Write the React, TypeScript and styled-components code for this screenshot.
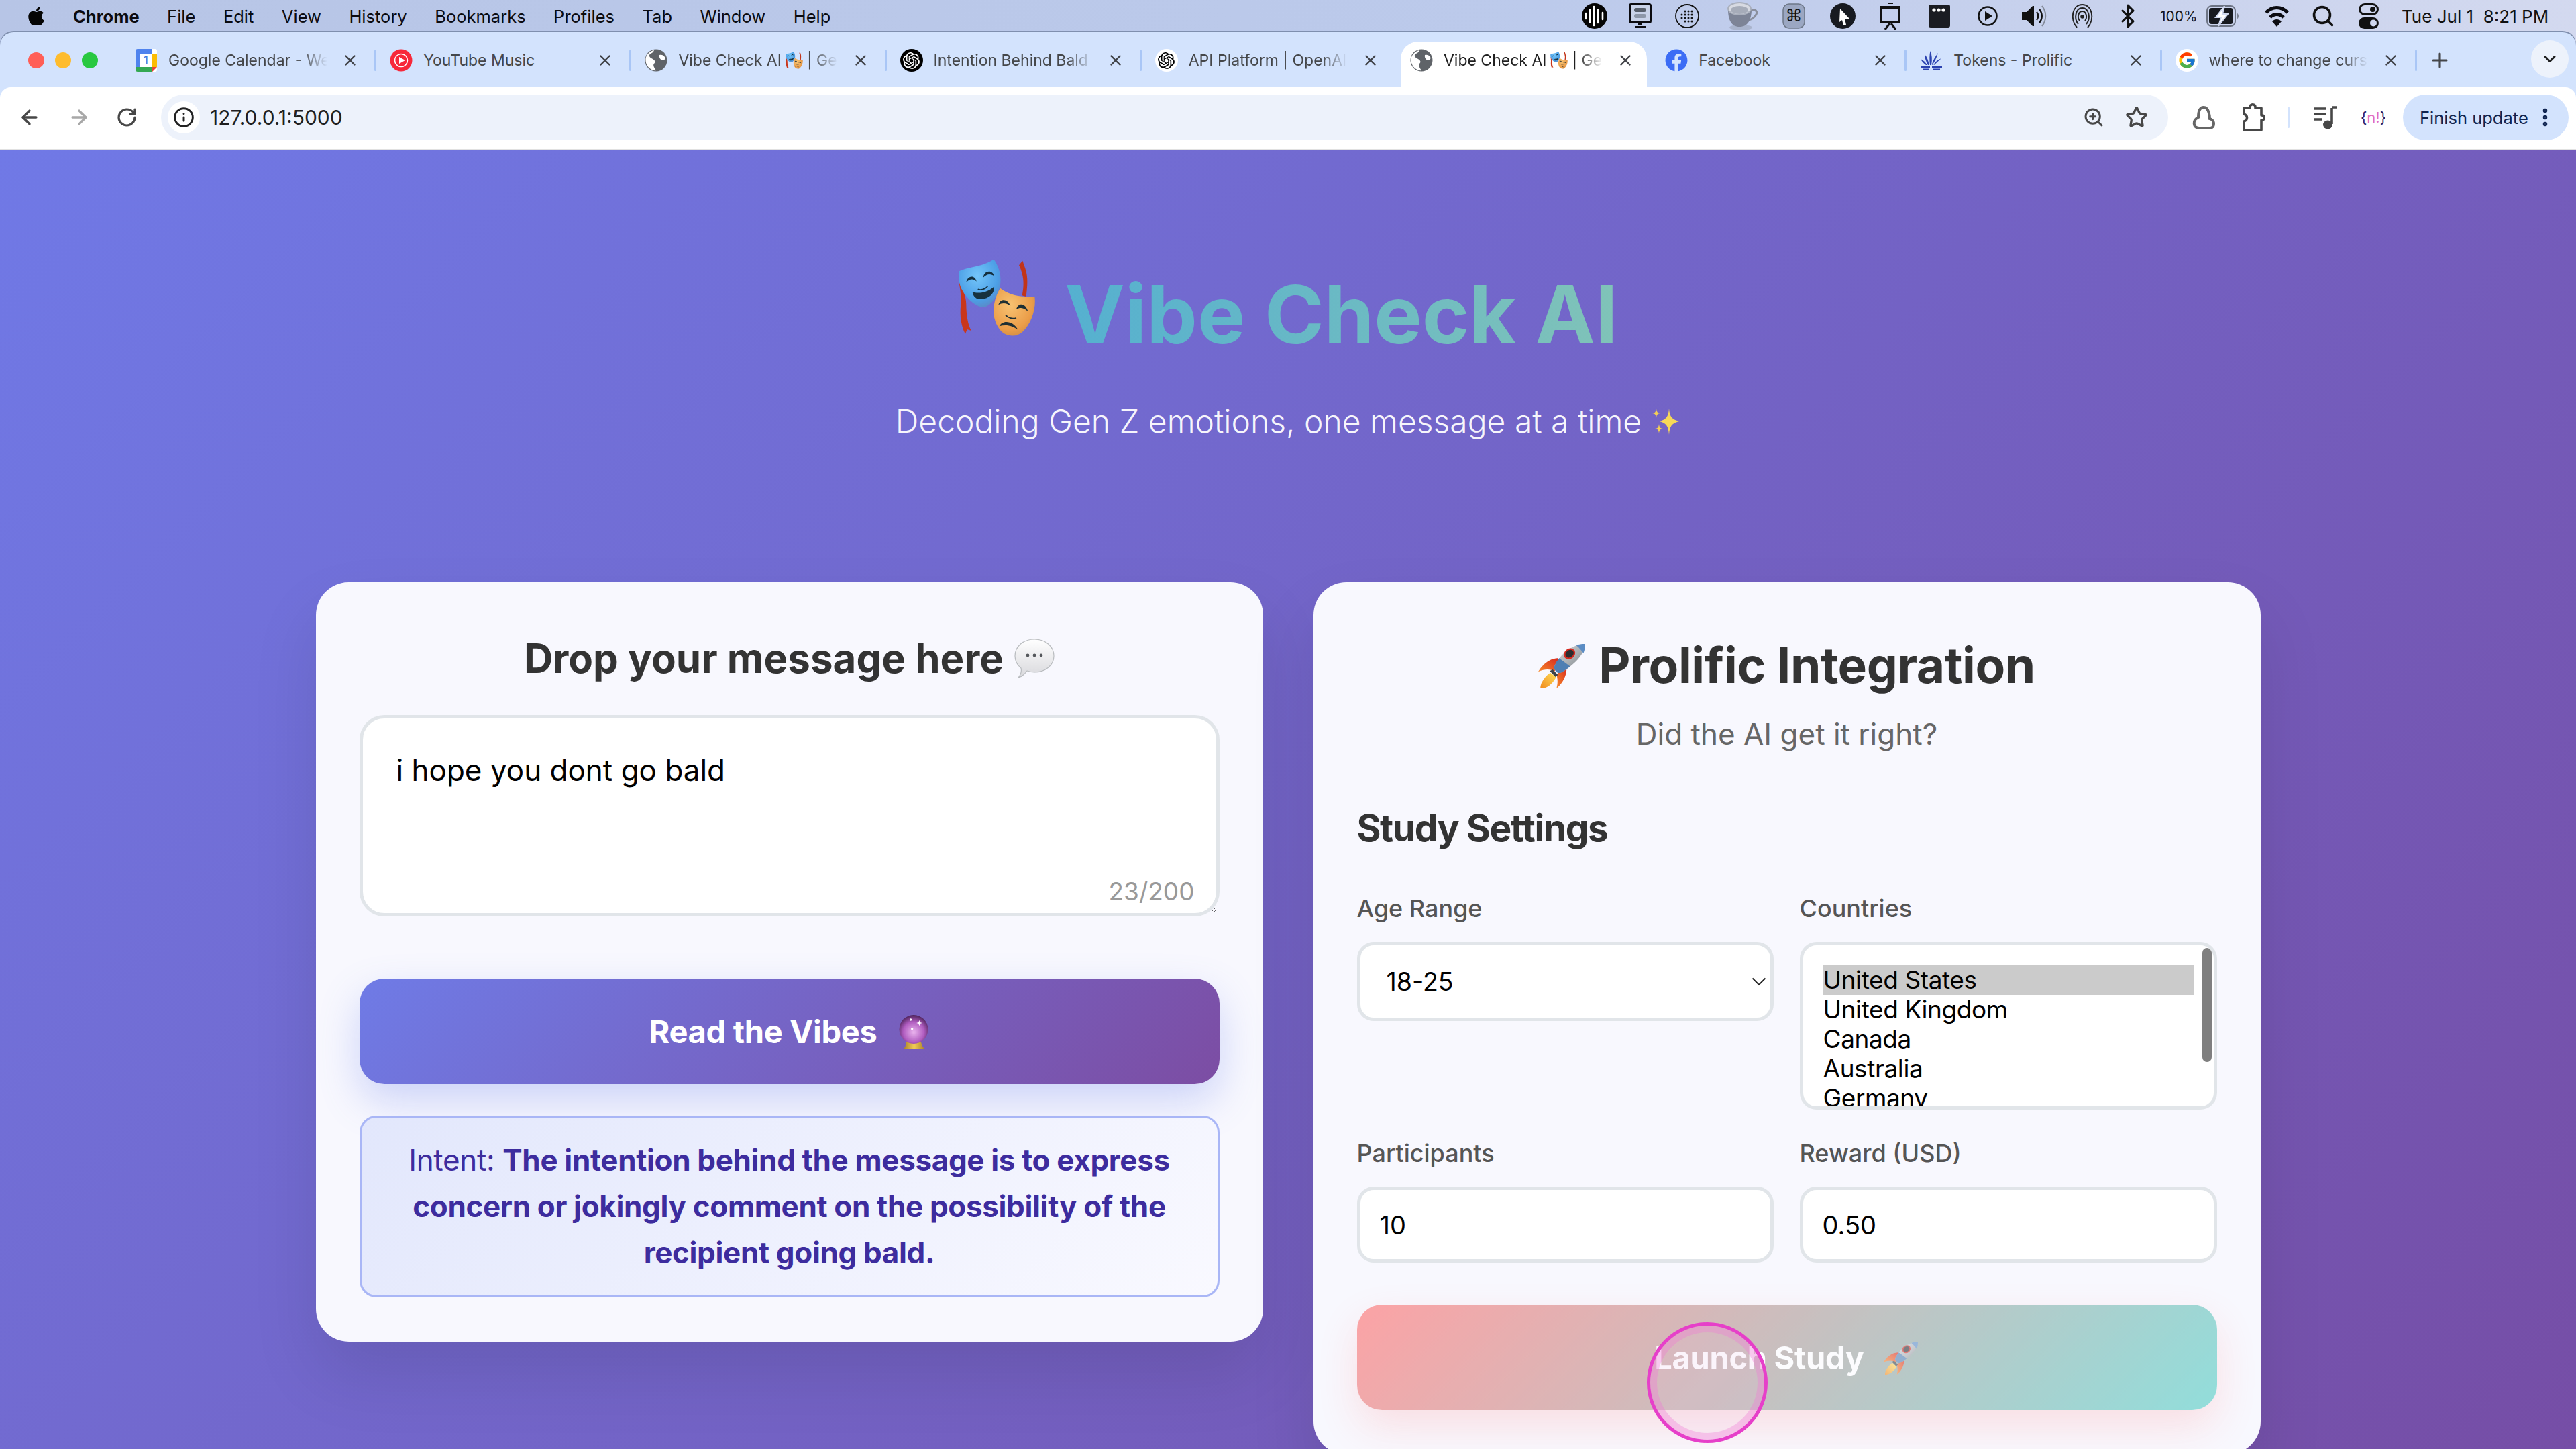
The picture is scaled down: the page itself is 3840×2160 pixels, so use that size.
import React from "react";
import styled, { createGlobalStyle } from "styled-components";
import {
  ArrowLeft, ArrowRight, RotateCw, Info, ZoomIn, Star, X, Plus, ChevronDown,
  Search, Bluetooth, EllipsisVertical,
} from "lucide-react";
import { FaApple, FaFacebook } from "react-icons/fa";
import { FcGoogle } from "react-icons/fc";
import { SiOpenai } from "react-icons/si";

const Global = createGlobalStyle`
  html, body { margin: 0; padding: 0; background: #b8c6e6; }
  * { box-sizing: border-box; }
  body { font-family: Inter, "Noto Sans", sans-serif; }
`;

const Root = styled.div`
  width: 3840px;
  height: 2160px;
  overflow: hidden;
  display: flex;
  flex-direction: column;
  background: linear-gradient(90deg, #b7c5e6 0%, #bccaeb 60%, #d3d9ef 100%);
`;

/* ---------- macOS menu bar ---------- */
const MenuBar = styled.div`
  height: 48px;
  flex: none;
  display: flex;
  align-items: center;
  padding-left: 38px;
  color: #0b0b10;
  font-size: 25.5px;
`;
const MenuItems = styled.div`
  display: flex;
  align-items: center;
  gap: 41.5px;
  margin-left: 39px;
`;
const MenuApp = styled.span`
  font-weight: 700;
`;
const MenuLabel = styled.span`
  font-weight: 400;
`;
const StatusArea = styled.div`
  margin-left: auto;
  display: flex;
  align-items: center;
  height: 48px;
`;
const StatusSlot = styled.div<{ $w: number }>`
  width: ${(p) => p.$w}px;
  height: 48px;
  flex: none;
  display: flex;
  align-items: center;
  justify-content: center;
`;
const BatteryText = styled.span`
  font-size: 21px;
  width: 70px;
  padding-left: 8px;
  color: #15151a;
`;
const ClockText = styled.span`
  font-size: 26px;
  width: 260px;
  white-space: pre;
  color: #111;
`;

/* ---------- browser chrome ---------- */
const BrowserWindow = styled.div`
  flex: none;
  background: #d3e3fd;
  border-radius: 20px 20px 0 0;
  box-shadow: 0 -2px 0 #7f8fae;
`;
const TabStrip = styled.div`
  height: 82px;
  display: flex;
  align-items: flex-end;
  position: relative;
`;
const Lights = styled.div`
  width: 180px;
  height: 68px;
  flex: none;
  display: flex;
  align-items: center;
  padding: 0 0 12px 42px;
  gap: 16px;
`;
const Light = styled.span<{ $c: string }>`
  width: 24px;
  height: 24px;
  border-radius: 50%;
  background: ${(p) => p.$c};
`;
const Tab = styled.div<{ $active?: boolean; $noSep?: boolean }>`
  width: 380.2px;
  height: 68px;
  flex: none;
  position: relative;
  display: flex;
  align-items: center;
  padding: 0 20px 12px 21px;
  gap: 16px;
  font-size: 23px;
  color: ${(p) => (p.$active ? "#1f1f1f" : "#45474a")};
  &::before {
    content: "";
    position: absolute;
    top: 0;
    bottom: 0;
    left: 7px;
    right: 6px;
    border-radius: 26px 26px 0 0;
    background: ${(p) => (p.$active ? "#fff" : "transparent")};
  }
  &::after {
    content: "";
    position: absolute;
    right: -1px;
    top: 12px;
    width: 3px;
    height: 32px;
    border-radius: 2px;
    background: ${(p) => (p.$noSep ? "transparent" : "#a9c6f6")};
  }
`;
const TabIcon = styled.span<{ $chip?: string }>`
  width: 34px;
  height: 34px;
  flex: none;
  display: flex;
  align-items: center;
  justify-content: center;
  position: relative;
  border-radius: 50%;
  background: ${(p) => p.$chip || "transparent"};
`;
const TabTitle = styled.span<{ $fade?: boolean }>`
  flex: 1;
  position: relative;
  white-space: nowrap;
  overflow: hidden;
  display: flex;
  align-items: center;
  gap: 6px;
  ${(p) => (p.$fade ? "mask-image: linear-gradient(90deg, #000 84%, transparent 100%);" : "")}
`;
const TabClose = styled.span`
  width: 36px;
  flex: none;
  position: relative;
  display: flex;
  justify-content: center;
  color: #3f4146;
`;
const NewTab = styled.div`
  width: 70px;
  height: 68px;
  flex: none;
  display: flex;
  align-items: center;
  justify-content: center;
  padding-bottom: 12px;
  color: #45474a;
`;
const TabMenu = styled.div`
  position: absolute;
  right: 11px;
  top: 12px;
  width: 56px;
  height: 56px;
  border-radius: 28px;
  background: #edf2fb;
  display: flex;
  align-items: center;
  justify-content: center;
  color: #1f1f1f;
`;
const Toolbar = styled.div`
  height: 94px;
  background: #fff;
  border-radius: 16px 16px 0 0;
  border-bottom: 2px solid #e1e1e1;
  display: flex;
  align-items: center;
  padding-bottom: 2px;
`;
const ToolSlot = styled.div<{ $w: number; $c?: string }>`
  width: ${(p) => p.$w}px;
  height: 68px;
  flex: none;
  display: flex;
  align-items: center;
  justify-content: center;
  color: ${(p) => p.$c || "#474747"};
`;
const AddressBar = styled.div`
  width: 2992px;
  height: 68px;
  flex: none;
  border-radius: 34px;
  background: #edf2fb;
  display: flex;
  align-items: center;
  padding-left: 10px;
  font-size: 30px;
  color: #1f1f1f;
`;
const InfoChip = styled.span`
  width: 48px;
  height: 48px;
  border-radius: 50%;
  background: #fff;
  display: flex;
  align-items: center;
  justify-content: center;
  margin-right: 15px;
  color: #222;
`;
const AddressEnd = styled.div`
  margin-left: auto;
  display: flex;
  align-items: center;
  padding-right: 13px;
`;
const ToolDivider = styled.span`
  width: 3px;
  height: 32px;
  border-radius: 2px;
  background: #d3e3fd;
`;
const NiText = styled.span`
  font-family: "Inter", sans-serif;
  font-size: 22px;
  color: #2a1a66;
  & > b {
    font-weight: 400;
    color: #e26bc0;
  }
`;
const UpdateButton = styled.div`
  width: 247px;
  height: 68px;
  flex: none;
  border-radius: 34px;
  background: #d3e3fd;
  color: #0f2450;
  font-size: 25.5px;
  display: flex;
  align-items: center;
  padding-left: 25px;
  gap: 8px;
  white-space: nowrap;
`;

/* ---------- page ---------- */
const Page = styled.main`
  flex: 1;
  min-height: 0;
  overflow: hidden;
  background: linear-gradient(135deg, #7079e6 0%, #764ba2 100%);
  background-size: 100% 2300px;
  padding-top: 185px;
  display: flex;
  flex-direction: column;
  align-items: center;
`;
const HeroTitle = styled.h1`
  margin: 0;
  height: 120px;
  display: flex;
  align-items: center;
  gap: 43px;
  font-size: 120px;
  line-height: 120px;
  font-weight: 700;
`;
const HeroMask = styled.span`
  display: block;
  height: 115px;
  margin-bottom: 50px;
`;
const HeroText = styled.span`
  background: linear-gradient(90deg, #55b0d0, #80c3b8);
  -webkit-background-clip: text;
  background-clip: text;
  color: transparent;
`;
const Tagline = styled.p`
  margin: 69px 0 0;
  height: 60px;
  display: flex;
  align-items: center;
  gap: 16px;
  font-size: 48px;
  line-height: 60px;
  font-weight: 300;
  color: rgba(255, 255, 255, 0.95);
`;
const Columns = styled.div`
  margin-top: 210px;
  display: grid;
  grid-template-columns: 1412px 1412px;
  gap: 75px;
  align-items: start;
`;
const Card = styled.section`
  background: #f8f8fe;
  border-radius: 49px;
  padding: 78px 65px 66px;
  box-shadow: 0 50px 100px rgba(0, 0, 0, 0.1);
`;
const CardHeading = styled.h2`
  margin: 0;
  display: flex;
  justify-content: center;
  align-items: center;
  gap: 16px;
  font-size: 60px;
  line-height: 70px;
  font-weight: 700;
  color: #333;
`;
const FieldWrap = styled.div`
  position: relative;
  margin-top: 50px;
  height: 300px;
`;
const MessageArea = styled.textarea`
  display: block;
  width: 100%;
  height: 100%;
  border: 5px solid #e1e5e9;
  border-radius: 37px;
  padding: 50px;
  background: #fff;
  font-family: Inter, sans-serif;
  font-size: 44px;
  line-height: 54px;
  color: #000;
  outline: none;
`;
const Counter = styled.span`
  position: absolute;
  right: 37px;
  bottom: 14px;
  font-size: 37px;
  line-height: 46px;
  color: #999;
`;
const PrimaryButton = styled.button`
  display: flex;
  align-items: center;
  justify-content: center;
  gap: 30px;
  width: 100%;
  height: 157px;
  margin-top: 93px;
  border: 0;
  border-radius: 37px;
  background: linear-gradient(135deg, #6f7be6, #7c4da3);
  box-shadow: 0 25px 60px rgba(102, 126, 234, 0.3);
  color: #fff;
  font-family: Inter, sans-serif;
  font-size: 47px;
  font-weight: 700;
  letter-spacing: -0.3px;
`;
const ResultBox = styled.div`
  margin-top: 47px;
  height: 271px;
  border: 3px solid #a9b6f6;
  border-radius: 25px;
  background: linear-gradient(135deg, #e2e7fc 0%, #f9f9ff 100%);
  padding: 29px 40px;
  text-align: center;
  font-size: 44px;
  line-height: 69px;
  letter-spacing: -0.35px;
  color: #3d2c9e;
  font-weight: 400;
  & > strong {
    font-weight: 700;
  }
`;
const IntegrationTitle = styled.h2`
  margin: 2px 0 -2px;
  display: flex;
  justify-content: center;
  align-items: center;
  gap: 18px;
  font-size: 73px;
  line-height: 88px;
  font-weight: 700;
  letter-spacing: -0.4px;
  color: #333;
`;
const Subhead = styled.p`
  margin: 31px 0 0;
  text-align: center;
  font-size: 44px;
  line-height: 58px;
  color: #666;
`;
const SettingsTitle = styled.h3`
  margin: 76px 0 0;
  font-size: 55px;
  line-height: 70px;
  font-weight: 700;
  letter-spacing: -1.4px;
  color: #333;
`;
const SettingsGrid = styled.div`
  margin-top: 62px;
  display: grid;
  grid-template-columns: 621px 622px;
  column-gap: 39px;
  row-gap: 42px;
  align-items: start;
`;
const Field = styled.div`
  display: flex;
  flex-direction: column;
  gap: 27px;
`;
const Label = styled.label`
  font-size: 36px;
  line-height: 46px;
  font-weight: 500;
  color: #555;
`;
const DropDown = styled.div`
  height: 118px;
  border: 5px solid #e1e5e9;
  border-radius: 25px;
  background: #fff;
  display: flex;
  align-items: center;
  justify-content: space-between;
  padding: 0 6px 0 39px;
  font-size: 37.5px;
  color: #000;
`;
const ListBox = styled.div`
  height: 250px;
  position: relative;
  overflow: hidden;
  border: 5px solid #e1e5e9;
  border-radius: 25px;
  background: #fff;
  padding: 30px 29px 0;
  font-size: 37px;
  letter-spacing: -0.4px;
  color: #000;
`;
const ListRow = styled.div<{ $selected?: boolean }>`
  height: 44px;
  line-height: 44px;
  width: 553px;
  padding-left: 1px;
  background: ${(p) => (p.$selected ? "#cbcbcb" : "transparent")};
`;
const ListScroll = styled.span`
  position: absolute;
  right: 3px;
  top: 4px;
  width: 14px;
  height: 170px;
  border-radius: 7px;
  background: #7f7f7f;
`;
const TextField = styled.input`
  height: 113px;
  width: 100%;
  border: 5px solid #e1e5e9;
  border-radius: 25px;
  background: #fff;
  padding: 0 29px;
  font-family: Inter, sans-serif;
  font-size: 38px;
  color: #000;
  outline: none;
`;
const LaunchWrap = styled.div`
  position: relative;
  margin-top: 63px;
  height: 157px;
`;
const LaunchButton = styled.button`
  display: flex;
  align-items: center;
  justify-content: center;
  gap: 28px;
  width: 100%;
  height: 157px;
  border: 0;
  border-radius: 37px;
  background: linear-gradient(135deg, #ff6b6b, #4ecdc4);
  box-shadow: 0 25px 60px rgba(255, 107, 107, 0.3);
  opacity: 0.6;
  color: #fff;
  font-family: Inter, sans-serif;
  font-size: 47px;
  font-weight: 700;
  letter-spacing: -0.3px;
`;
const CursorRing = styled.div`
  position: absolute;
  left: 432px;
  top: 26px;
  width: 180px;
  height: 180px;
  border-radius: 50%;
  border: 5px solid #e63fc9;
  background: rgba(245, 190, 230, 0.12);
  box-shadow: inset 0 0 0 10px rgba(240, 120, 215, 0.35);
`;

/* ---------- pictures ---------- */
const Masks = ({ w = 116, h = 115 }: { w?: number; h?: number }) => (
  <svg width={w} height={h} viewBox="35 30 348 345" style={{ flex: "none", display: "block" }}>
    <defs>
      <radialGradient id="mb" cx="45%" cy="35%" r="70%">
        <stop offset="0" stopColor="#74c6fa" />
        <stop offset="0.7" stopColor="#4c9fe6" />
        <stop offset="1" stopColor="#5d86c2" />
      </radialGradient>
      <radialGradient id="mo" cx="40%" cy="35%" r="75%">
        <stop offset="0" stopColor="#f7c272" />
        <stop offset="0.7" stopColor="#eb9d48" />
        <stop offset="1" stopColor="#c98845" />
      </radialGradient>
    </defs>
    <path d="M308 55 L324 35 L336 70 C350 110 345 150 340 195 L322 190 C332 140 330 100 308 55Z" fill="#c23419" />
    <path d="M38 125 C50 150 72 190 72 230 C72 270 78 320 95 348 L76 342 L68 362 C50 330 42 280 48 230 C50 190 45 160 38 125Z" fill="#c9361c" />
    <path d="M40 82 C80 62 150 62 195 28 C222 66 236 120 216 172 C200 215 172 240 148 244 C108 238 62 192 46 150 C38 125 36 100 40 82Z" fill="url(#mb)" />
    <path d="M72 132 C78 100 112 98 118 128 C105 115 88 115 72 132Z M148 110 C152 76 190 74 198 104 C182 92 165 92 148 110Z" fill="#14303f" />
    <path d="M124 163 C135 168 155 165 168 150" stroke="#14303f" strokeWidth="5" fill="none" />
    <path d="M100 175 C130 185 175 175 197 150 C200 190 160 210 130 207 C112 205 102 190 100 175Z" fill="#17323f" />
    <path d="M224 158 C262 190 330 200 378 195 C386 250 362 320 322 355 C300 374 268 376 240 360 C206 335 188 280 196 240 C198 210 210 180 224 158Z" fill="url(#mo)" />
    <path d="M216 232 C224 202 258 204 270 238 C252 222 234 222 216 232Z M296 252 C304 222 338 222 348 262 C332 245 314 242 296 252Z" fill="#1e2f33" />
    <path d="M248 278 C260 292 280 296 296 290" stroke="#1e2f33" strokeWidth="5" fill="none" />
    <path d="M220 328 C232 300 280 300 304 344 C280 326 250 318 220 328Z" fill="#1e2f33" />
  </svg>
);

const Sparkles = () => (
  <svg width="42" height="42" viewBox="0 0 42 42" style={{ flex: "none" }}>
    <path d="M25 2 C26 14 29 18 40 21 C29 24 26 28 25 41 C24 28 21 24 11 21 C21 18 24 14 25 2Z" fill="#f7d858" />
    <path d="M6 2 C6.5 7 8 8.5 12 9 C8 9.5 6.5 11 6 16 C5.5 11 4 9.5 0 9 C4 8.5 5.5 7 6 2Z" fill="#f4cf55" />
    <path d="M10 25 C10.5 30 12 31.5 16 32 C12 32.5 10.5 34 10 39 C9.5 34 8 32.5 4 32 C8 31.5 9.5 30 10 25Z" fill="#f4cf55" />
  </svg>
);

const Bubble = () => (
  <svg width="60" height="60" viewBox="0 0 60 60" style={{ flex: "none" }}>
    <defs>
      <linearGradient id="bb" x1="0" y1="0" x2="0" y2="1">
        <stop offset="0" stopColor="#ffffff" />
        <stop offset="1" stopColor="#d8d8dc" />
      </linearGradient>
    </defs>
    <path d="M30 2 C47 2 59 13 59 27 C59 41 46 51 30 51 C26 51 22 50 19 49 C16 53 12 58 6 59 C10 54 11 49 10 45 C4 40 1 34 1 27 C1 13 13 2 30 2Z" fill="url(#bb)" stroke="#b9bcbf" strokeWidth="1.2" />
    <circle cx="20" cy="26" r="2.4" fill="#55585c" />
    <circle cx="30" cy="26" r="2.4" fill="#55585c" />
    <circle cx="40" cy="26" r="2.4" fill="#55585c" />
  </svg>
);

const Rocket = ({ w, h, id }: { w: number; h: number; id: string }) => (
  <svg width={w} height={h} viewBox="30 18 216 204" style={{ flex: "none" }}>
    <defs>
      <linearGradient id={`${id}b`} x1="0" y1="0" x2="1" y2="1">
        <stop offset="0" stopColor="#d9dde0" />
        <stop offset="0.55" stopColor="#a9aeb2" />
        <stop offset="1" stopColor="#6d7378" />
      </linearGradient>
      <linearGradient id={`${id}f`} x1="1" y1="0" x2="0" y2="1">
        <stop offset="0" stopColor="#ffe15a" />
        <stop offset="1" stopColor="#f08a1d" />
      </linearGradient>
      <linearGradient id={`${id}r`} x1="1" y1="0" x2="0" y2="1">
        <stop offset="0" stopColor="#d8281c" />
        <stop offset="1" stopColor="#f88b2a" />
      </linearGradient>
    </defs>
    <path d="M120 88 C95 88 60 100 30 148 C60 134 85 136 104 146Z" fill={`url(#${id}r)`} />
    <path d="M156 122 C160 150 150 190 112 222 C120 190 115 175 112 160Z" fill={`url(#${id}r)`} />
    <path d="M84 152 L110 172 C100 195 70 225 40 222 C38 200 60 168 84 152Z" fill={`url(#${id}f)`} />
    <path d="M82 145 L95 138 L118 162 L108 172Z" fill="#3d4347" />
    <path d="M240 24 C200 24 140 50 104 120 C100 128 100 136 110 146 C120 156 128 154 136 150 C190 118 238 70 240 24Z" fill={`url(#${id}b)`} />
    <path d="M104 120 C100 128 100 136 110 146 C120 156 128 154 136 150 C150 142 165 132 172 124 L124 88 C115 98 109 108 104 120Z" fill="#4f7fb3" />
    <path d="M240 24 C225 24 212 26 200 30 C216 44 226 56 232 66 C238 52 240 38 240 24Z" fill="#5b8cc4" />
    <ellipse cx="170" cy="68" rx="27" ry="23" transform="rotate(-38 170 68)" fill="#d52a20" />
    <ellipse cx="170" cy="68" rx="20" ry="16" transform="rotate(-38 170 68)" fill="#2c2c30" />
  </svg>
);

const Crystal = () => (
  <svg width="48" height="52" viewBox="55 30 140 155" style={{ flex: "none" }}>
    <defs>
      <radialGradient id="cb" cx="50%" cy="60%" r="60%">
        <stop offset="0" stopColor="#eab4ee" />
        <stop offset="0.6" stopColor="#b05cc0" />
        <stop offset="1" stopColor="#4c2258" />
      </radialGradient>
      <linearGradient id="cg" x1="0" y1="0" x2="1" y2="0">
        <stop offset="0" stopColor="#a8802a" />
        <stop offset="0.5" stopColor="#f2cc56" />
        <stop offset="1" stopColor="#a8802a" />
      </linearGradient>
    </defs>
    <path d="M92 155 L158 155 C162 170 168 178 174 182 L80 182 C86 178 90 170 92 155Z" fill="url(#cg)" />
    <circle cx="125" cy="97" r="64" fill="url(#cb)" />
    <path d="M150 56 L153 66 L163 69 L153 72 L150 82 L147 72 L137 69 L147 66Z" fill="#fff" />
    <circle cx="112" cy="54" r="5" fill="#fff" />
    <circle cx="118" cy="95" r="5" fill="#fff" />
  </svg>
);

const GlobeIcon = () => (
  <svg width="34" height="34" viewBox="0 0 34 34">
    <circle cx="17" cy="17" r="16.5" fill="#5f6368" />
    <path d="M14 2 C13 6 9 6 7 9 C6 12 10 14 12 15 C15 17 17 19 14 22 C12 24 14 28 17 32 C15 32.5 12 32 9 30 C3 26 1 20 1.5 14 C3 8 8 3 14 2Z" fill="#fff" />
    <path d="M22 9 C25 8 28 9 30 12 C31 14 30 17 27 17 C24 17 21 13 22 9Z" fill="#fff" />
  </svg>
);

const CalendarIcon = () => (
  <svg width="32" height="34" viewBox="0 0 32 34">
    <rect width="32" height="34" rx="3" fill="#fff" />
    <path d="M3 0 H25 V7 H0 V3 A3 3 0 0 1 3 0Z" fill="#4f83ee" />
    <rect x="0" y="7" width="6" height="20" fill="#4f83ee" />
    <rect x="25" y="7" width="7" height="20" fill="#fbbc04" />
    <path d="M0 27 H25 V34 H3 A3 3 0 0 1 0 31Z" fill="#34a853" />
    <path d="M25 27 H32 L25 34Z" fill="#ea4335" />
    <text x="15.5" y="23" textAnchor="middle" fontSize="17" fontFamily="Inter" fill="#3f77e0">1</text>
  </svg>
);

const MusicIcon = () => (
  <svg width="34" height="34" viewBox="0 0 34 34">
    <circle cx="17" cy="17" r="16.5" fill="#f7283a" />
    <circle cx="17" cy="17" r="9.5" fill="none" stroke="#fff" strokeWidth="1.6" />
    <path d="M14 12 L23 17 L14 22Z" fill="#fff" />
  </svg>
);

const ProlificIcon = () => (
  <svg width="32" height="30" viewBox="0 0 32 30" fill="#2b42b0">
    <path d="M14.5 1 C17 7 17.5 14 16 22 L14 22 C13 14 13 7 14.5 1Z" />
    <path d="M6 6 C9.5 10 12 16 12.5 22 L11 22 C8 17 6 11 6 6Z" />
    <path d="M26 4 C24 11 21 17 17.5 22 L16.8 21 C18.5 15 22 9 26 4Z" />
    <path d="M0 13 C4 15 8 18 9.5 22 L8 22 C5 20 2 17 0 13Z" />
    <path d="M31 12 C27 15 24 19 20 22 L19.5 21 C22 17 26 14 31 12Z" />
    <rect x="0" y="24" width="14" height="2.5" />
    <rect x="17" y="24" width="15" height="2.5" />
    <rect x="3" y="27.5" width="9" height="2.5" />
    <rect x="19" y="27.5" width="10" height="2.5" />
  </svg>
);

const s = { display: "block" } as const;
const Wave = () => (
  <svg width="38" height="38" viewBox="0 0 38 38" style={s}>
    <circle cx="19" cy="19" r="19" fill="#050505" />
    <g stroke="#fff" strokeWidth="2.6" strokeLinecap="round">
      <path d="M6 15V23M12 10V28M18 5V33M24 10V29M31 14V24" />
    </g>
  </svg>
);
const Monitor = () => (
  <svg width="34" height="38" viewBox="0 0 34 38" style={s}>
    <rect x="1.5" y="1.5" width="31" height="27" rx="2" fill="#c8d2e8" stroke="#0b0b10" strokeWidth="3" />
    <rect x="8" y="7" width="18" height="6" rx="3" fill="#58606c" />
    <rect x="8" y="16" width="18" height="6" rx="3" fill="#8d97a8" />
    <path d="M14 29 H20 V33 H14Z M9 34 H25 V37 H9Z" fill="#0b0b10" />
  </svg>
);
const DotCircle = () => (
  <svg width="36" height="36" viewBox="0 0 36 36" style={s}>
    <circle cx="18" cy="18" r="17" fill="none" stroke="#111" strokeWidth="1.8" />
    <g fill="#111">
      {[11, 16, 21, 26].map((y) =>
        [9, 14, 19, 24, 28].slice(y === 11 || y === 26 ? 1 : 0, 4).map((x) => <circle key={`${x}${y}`} cx={x + 1} cy={y} r="1.5" />)
      )}
    </g>
  </svg>
);
const Coffee = () => (
  <svg width="46" height="44" viewBox="0 0 46 44" style={s}>
    <ellipse cx="20" cy="39" rx="17" ry="4" fill="#9aa3b8" opacity="0.6" />
    <path d="M34 14 C42 10 46 16 42 21 C40 24 36 27 32 28" fill="none" stroke="#8a8f9d" strokeWidth="3" />
    <path d="M1 12 C1 28 6 38 18 38 C30 38 36 28 36 12Z" fill="#7d8496" />
    <ellipse cx="18" cy="11" rx="17" ry="9" fill="#d7dae2" stroke="#aab0bd" strokeWidth="2" />
    <ellipse cx="18" cy="13" rx="13" ry="6" fill="#a6acb9" />
  </svg>
);
const CmdKey = () => (
  <svg width="34" height="38" viewBox="0 0 34 38" style={s}>
    <rect x="1" y="1" width="32" height="36" rx="9" fill="#9ba7c2" stroke="#6e7888" strokeWidth="1.5" />
    <text x="17" y="27" textAnchor="middle" fontSize="25" fontFamily="DejaVu Sans" fill="#111">⌘</text>
  </svg>
);
const CursorDot = () => (
  <svg width="38" height="38" viewBox="0 0 38 38" style={s}>
    <circle cx="19" cy="19" r="19" fill="#171a20" />
    <path d="M15 8 L29 23 L22 23 L24 32 L20 33 L18 25 L14 28Z" fill="#fff" />
  </svg>
);
const Easel = () => (
  <svg width="32" height="42" viewBox="0 0 32 42" style={s}>
    <path d="M12 1 H20 V3 H12Z M1 6 H31 V32 H1Z M4 11 V28 H28 V11Z" fill="#111" fillRule="evenodd" />
    <path d="M15 32 L8 41 M17 32 L24 41" stroke="#111" strokeWidth="3" />
  </svg>
);
const WinDots = () => (
  <svg width="32" height="34" viewBox="0 0 32 34" style={s}>
    <rect width="32" height="34" rx="3" fill="#1a1c22" />
    <circle cx="8" cy="8" r="2.6" fill="#fff" />
    <circle cx="15" cy="8" r="2.6" fill="#fff" />
    <circle cx="22" cy="8" r="2.6" fill="#fff" />
  </svg>
);
const PlayRing = () => (
  <svg width="30" height="30" viewBox="0 0 30 30" style={s}>
    <circle cx="15" cy="15" r="13.5" fill="none" stroke="#111" strokeWidth="2.5" />
    <path d="M11 8 L22 15 L11 22Z" fill="#111" />
  </svg>
);
const Volume = () => (
  <svg width="40" height="36" viewBox="0 0 40 36" style={s}>
    <path d="M1 12 H8 L17 3 H19 V33 H17 L8 24 H1Z" fill="#111" />
    <path d="M23 12 C26 16 26 20 23 24 M27 8 C32 14 32 22 27 28" fill="none" stroke="#111" strokeWidth="2.4" />
    <path d="M31 3 C38 12 38 24 31 33" fill="none" stroke="#838a98" strokeWidth="2" />
  </svg>
);
const AirDrop = () => (
  <svg width="32" height="38" viewBox="0 0 32 38" style={s}>
    <g fill="none" stroke="#222" strokeWidth="2">
      <path d="M8 36 C-3 24 1 2 16 2 C31 2 35 24 24 36" />
      <path d="M10 31 C3 23 6 7 16 7 C26 7 29 23 22 31" />
      <path d="M12 26 C8 21 10 12 16 12 C22 12 24 21 20 26" />
    </g>
    <circle cx="16" cy="20" r="2.8" fill="#222" />
  </svg>
);
const Battery = () => (
  <svg width="48" height="32" viewBox="0 0 48 32" style={s}>
    <rect x="1" y="1" width="42" height="30" rx="7" fill="none" stroke="#6d7484" strokeWidth="2" />
    <rect x="4" y="4" width="36" height="24" rx="4" fill="#17191f" />
    <path d="M45 11 C47 12 48 14 48 16 C48 18 47 20 45 21Z" fill="#7b8292" />
    <path d="M27 1 L14 18 H22 L18 31 L32 13 H24Z" fill="#fff" stroke="#cfd7ee" strokeWidth="2" />
  </svg>
);
const WifiMark = () => (
  <svg width="36" height="34" viewBox="0 0 36 34" style={s}>
    <g fill="none" stroke="#0b0b10" strokeWidth="5">
      <path d="M2 12 C11 2 25 2 34 12" />
      <path d="M8 19 C14 13 22 13 28 19" />
    </g>
    <path d="M18 33 L11 25 C15 21 21 21 25 25Z" fill="#0b0b10" />
  </svg>
);
const Toggles = () => (
  <svg width="30" height="38" viewBox="0 0 30 38" style={s}>
    <rect x="1.5" y="1.5" width="27" height="15" rx="7.5" fill="none" stroke="#111" strokeWidth="3" />
    <circle cx="21" cy="9" r="4" fill="#111" />
    <rect x="0" y="21" width="30" height="17" rx="8.5" fill="#111" />
    <circle cx="22" cy="29.5" r="5" fill="#d0d7ee" />
  </svg>
);
const CloudMark = () => (
  <svg width="34" height="38" viewBox="0 0 34 38" style={s}>
    <path d="M10 35 H26 C34 35 34 23 26 21 C26 18 25 4 17 4 C9 4 9 16 9 19 C0 23 1 35 10 35Z" fill="none" stroke="#666" strokeWidth="4" />
  </svg>
);
const PuzzleMark = () => (
  <svg width="34" height="44" viewBox="0 0 34 44" style={s}>
    <path d="M2 8 H11 C10 1 20 1 19 8 H28 V19 C34 18 34 27 28 26 V41 H2 V28 C8 26 8 19 2 17Z" fill="none" stroke="#474747" strokeWidth="3.6" strokeLinejoin="round" />
  </svg>
);
const QueueMark = () => (
  <svg width="34" height="36" viewBox="0 0 34 36" style={s}>
    <path d="M0 5 H18 M0 13 H18 M0 21 H12" stroke="#474747" strokeWidth="3.4" />
    <path d="M26 4 V28 M26 3 H34" stroke="#474747" strokeWidth="3.6" />
    <ellipse cx="20" cy="29" rx="7" ry="6.5" fill="#474747" />
  </svg>
);
const SoftChevron = () => (
  <svg width="22" height="13" viewBox="0 0 22 13" style={{ flex: "none" }}>
    <path d="M1.5 1.5 L11 11 L20.5 1.5" fill="none" stroke="#222" strokeWidth="1.8" />
  </svg>
);

const statusSlots: [number, React.ReactNode][] = [
  [70, <Wave />], [66, <Monitor />], [74, <DotCircle />], [92, <Coffee />], [60, <CmdKey />],
  [86, <CursorDot />], [56, <Easel />], [90, <WinDots />], [54, <PlayRing />], [86, <Volume />],
  [56, <AirDrop />], [80, <Bluetooth size={38} strokeWidth={2} color="#111" />],
];

const tabs: { icon: React.ReactNode; chip?: string; title: React.ReactNode; fade?: boolean; active?: boolean; noSep?: boolean }[] = [
  { icon: <CalendarIcon />, title: "Google Calendar - Week", fade: true },
  { icon: <MusicIcon />, title: "YouTube Music" },
  { icon: <GlobeIcon />, title: <>Vibe Check AI <Masks w={26} h={26} /> | Gen Z</>, fade: true },
  { icon: <SiOpenai size={25} color="#fff" />, chip: "#000", title: "Intention Behind Bald Comment", fade: true },
  { icon: <SiOpenai size={25} color="#000" />, chip: "#fff", title: "API Platform | OpenAI Docs", fade: true, noSep: true },
  { icon: <GlobeIcon />, title: <>Vibe Check AI <Masks w={26} h={26} /> | Gen Z</>, fade: true, active: true, noSep: true },
  { icon: <FaFacebook size={34} color="#3b6cf5" />, title: "Facebook" },
  { icon: <ProlificIcon />, title: "Tokens - Prolific" },
  { icon: <FcGoogle size={28} />, chip: "#fff", title: "where to change cursor color", fade: true },
];

export default function App() {
  return (
    <Root>
      <Global />
      <MenuBar>
        <FaApple size={32} color="#050505" />
        <MenuItems>
          <MenuApp>Chrome</MenuApp>
          {["File", "Edit", "View", "History", "Bookmarks", "Profiles", "Tab", "Window", "Help"].map((m) => (
            <MenuLabel key={m}>{m}</MenuLabel>
          ))}
        </MenuItems>
        <StatusArea>
          {statusSlots.map(([w, icon], i) => (
            <StatusSlot key={i} $w={w}>{icon}</StatusSlot>
          ))}
          <BatteryText>100%</BatteryText>
          <StatusSlot $w={62}><Battery /></StatusSlot>
          <StatusSlot $w={100}><WifiMark /></StatusSlot>
          <StatusSlot $w={38}><Search size={36} strokeWidth={2.4} color="#111" /></StatusSlot>
          <StatusSlot $w={98}><Toggles /></StatusSlot>
          <ClockText>Tue Jul 1  8:21 PM</ClockText>
        </StatusArea>
      </MenuBar>

      <BrowserWindow>
        <TabStrip>
          <Lights>
            <Light $c="#ff5f57" />
            <Light $c="#febc2e" />
            <Light $c="#28c840" />
          </Lights>
          {tabs.map((t, i) => (
            <Tab key={i} $active={t.active} $noSep={t.noSep}>
              <TabIcon $chip={t.chip}>{t.icon}</TabIcon>
              <TabTitle $fade={t.fade}>{t.title}</TabTitle>
              <TabClose><X size={26} strokeWidth={2.2} /></TabClose>
            </Tab>
          ))}
          <NewTab><Plus size={34} strokeWidth={2.2} /></NewTab>
          <TabMenu><ChevronDown size={28} strokeWidth={2.6} /></TabMenu>
        </TabStrip>
        <Toolbar>
          <ToolSlot $w={88}><ArrowLeft size={34} strokeWidth={2.4} /></ToolSlot>
          <ToolSlot $w={60} $c="#a8a8a8"><ArrowRight size={34} strokeWidth={2.4} /></ToolSlot>
          <ToolSlot $w={82}><RotateCw size={32} strokeWidth={2.4} /></ToolSlot>
          <ToolSlot $w={10} />
          <AddressBar>
            <InfoChip><Info size={32} strokeWidth={2.2} /></InfoChip>
            127.0.0.1:5000
            <AddressEnd>
              <ToolSlot $w={60}><ZoomIn size={32} strokeWidth={2.2} /></ToolSlot>
              <ToolSlot $w={68}><Star size={34} strokeWidth={2.4} /></ToolSlot>
            </AddressEnd>
          </AddressBar>
          <ToolSlot $w={106}><CloudMark /></ToolSlot>
          <ToolSlot $w={44}><PuzzleMark /></ToolSlot>
          <ToolSlot $w={58}><ToolDivider /></ToolSlot>
          <ToolSlot $w={54}><QueueMark /></ToolSlot>
          <ToolSlot $w={88}><NiText>{"{"}<b>n!</b>{"}"}</NiText></ToolSlot>
          <UpdateButton>
            Finish update
            <EllipsisVertical size={34} strokeWidth={2.6} />
          </UpdateButton>
        </Toolbar>
      </BrowserWindow>

      <Page>
        <HeroTitle>
          <HeroMask><Masks /></HeroMask>
          <HeroText>Vibe Check AI</HeroText>
        </HeroTitle>
        <Tagline>
          Decoding Gen Z emotions, one message at a time
          <Sparkles />
        </Tagline>
        <Columns>
          <Card>
            <CardHeading>Drop your message here <Bubble /></CardHeading>
            <FieldWrap>
              <MessageArea readOnly defaultValue="i hope you dont go bald" />
              <Counter>23/200</Counter>
            </FieldWrap>
            <PrimaryButton>Read the Vibes <Crystal /></PrimaryButton>
            <ResultBox>
              Intent: <strong>The intention behind the message is to express concern or jokingly comment on the possibility of the recipient going bald.</strong>
            </ResultBox>
          </Card>
          <Card>
            <IntegrationTitle><Rocket w={72} h={68} id="r1" />Prolific Integration</IntegrationTitle>
            <Subhead>Did the AI get it right?</Subhead>
            <SettingsTitle>Study Settings</SettingsTitle>
            <SettingsGrid>
              <Field>
                <Label>Age Range</Label>
                <DropDown>18-25<SoftChevron /></DropDown>
              </Field>
              <Field>
                <Label>Countries</Label>
                <ListBox>
                  <ListRow $selected>United States</ListRow>
                  <ListRow>United Kingdom</ListRow>
                  <ListRow>Canada</ListRow>
                  <ListRow>Australia</ListRow>
                  <ListRow>Germany</ListRow>
                  <ListScroll />
                </ListBox>
              </Field>
              <Field>
                <Label>Participants</Label>
                <TextField readOnly defaultValue="10" />
              </Field>
              <Field>
                <Label>Reward (USD)</Label>
                <TextField readOnly defaultValue="0.50" />
              </Field>
            </SettingsGrid>
            <LaunchWrap>
              <LaunchButton>Launch Study <Rocket w={54} h={50} id="r2" /></LaunchButton>
              <CursorRing />
            </LaunchWrap>
          </Card>
        </Columns>
      </Page>
    </Root>
  );
}
